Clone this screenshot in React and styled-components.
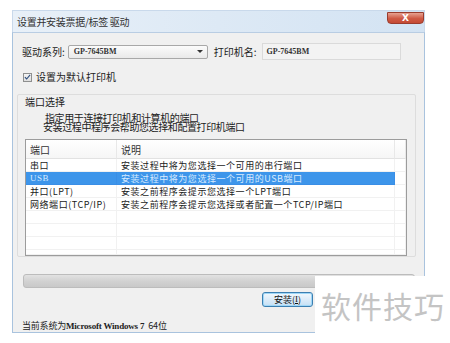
import styled, { createGlobalStyle } from "styled-components";

const Global = createGlobalStyle`
  html, body {
    margin: 0;
    padding: 0;
    background: #ffffff;
    width: 450px;
    height: 343px;
    overflow: hidden;
  }
  body {
    font-family: "Noto Sans CJK SC", "Liberation Sans", sans-serif;
    font-size: 11px;
    color: #1a1a1a;
  }
`;

const Page = styled.div`
  position: relative;
  width: 450px;
  height: 343px;
  padding-top: 10px;
  box-sizing: border-box;
`;

const Window = styled.div`
  margin-left: 12px;
  width: 413px;
`;

const TitleBar = styled.div`
  height: 22px;
  display: flex;
  align-items: center;
  justify-content: space-between;
  padding-left: 4px;
  background: linear-gradient(90deg, #e8f0f8 0%, #dde9f5 50%, #d3e3f3 100%);
  border: 1px solid #c9d9eb;
  border-bottom: none;
  box-sizing: border-box;
`;

const Title = styled.span`
  font-size: 10px;
  color: #333;
  letter-spacing: -0.3px;
`;

const CloseBtn = styled.div`
  align-self: flex-start;
  margin-top: 1px;
  width: 37px;
  height: 12px;
  border-radius: 0 0 4px 4px;
  background: linear-gradient(180deg, #e7a291 0%, #cf5a45 55%, #c44a34 100%);
  border: 1px solid #9a3c2e;
  box-sizing: border-box;
  display: flex;
  align-items: center;
  justify-content: center;
  color: #fff;
  font: bold 9px "DejaVu Sans", sans-serif;
`;

const Body = styled.div`
  height: 301px;
  background: #f0f0f0;
  border: 1px solid #a9c3de;
  border-top: 1px solid #b9cde3;
  box-sizing: border-box;
  padding: 10px 8px 0 9px;
  display: flex;
  flex-direction: column;
`;

const Row = styled.div`
  display: flex;
  align-items: center;
  height: 17px;
`;

const Label = styled.span`
  font-size: 10px;
  line-height: 12px;
  color: #222;
  margin-right: ${({ $gap }) => $gap || 4}px;
`;

const Select = styled.div`
  width: 140px;
  height: 14px;
  box-sizing: border-box;
  border: 1px solid #a8a8a8;
  border-radius: 2px;
  background: linear-gradient(180deg, #fbfbfb, #e9e9e9);
  display: flex;
  align-items: center;
  justify-content: space-between;
  padding: 0 4px 0 5px;
  margin-right: 6px;
`;

const Mono = styled.span`
  font-family: "Liberation Serif", serif;
  font-weight: bold;
  font-size: 8px;
  line-height: 10px;
  color: #333;
`;

const Arrow = styled.span`
  width: 0;
  height: 0;
  border-left: 3px solid transparent;
  border-right: 3px solid transparent;
  border-top: 3px solid #333;
`;

const Input = styled.div`
  width: 139px;
  height: 17px;
  box-sizing: border-box;
  border: 1px solid #dadada;
  background: #f3f3f3;
  display: flex;
  align-items: center;
  padding-left: 4px;
`;

const CheckRow = styled.div`
  display: flex;
  align-items: center;
  margin-top: 11px;
  padding-left: 1px;
  height: 12px;
`;

const Box = styled.span`
  width: 9px;
  height: 9px;
  box-sizing: border-box;
  border: 1px solid #8e8f8f;
  background: linear-gradient(180deg, #f4f4f4, #dedede);
  display: flex;
  align-items: center;
  justify-content: center;
  margin-right: 4px;
`;

const Group = styled.div`
  margin-top: 11px;
  margin-left: -5px;
  width: 399px;
  height: 170px;
  box-sizing: border-box;
  border: 1px solid #dddddd;
  border-radius: 2px;
  padding: 0 0 0 7px;
  display: flex;
  flex-direction: column;
`;

const GroupLabel = styled.span`
  font-size: 10px;
  margin-top: 1px;
  line-height: 12px;
  color: #222;
`;

const Desc = styled.div`
  margin-top: 5px;
  padding-left: 20px;
  font-size: 10px;
  line-height: 9px;
  color: #222;
  letter-spacing: -0.4px;
  & div:last-child {
    margin-left: -2px;
  }
`;

const Table = styled.div`
  margin-top: 8px;
  width: 382px;
  height: 117px;
  box-sizing: border-box;
  border: 1px solid #9c9c9c;
  background: #ffffff;
  display: grid;
  grid-template-columns: 91px 278px 1fr;
  grid-template-rows: 19px repeat(7, 13px) 1fr;
  font-size: 9px;
  line-height: 13px;
`;

const Head = styled.div`
  border-bottom: 1px solid #e2e2e2;
  border-right: 1px solid #e8e8e8;
  padding-left: 4px;
  display: flex;
  align-items: center;
  color: #333;
  font-size: 10px;
  background: linear-gradient(180deg, #ffffff, #f6f6f6);
`;

const Cell = styled.div`
  padding-left: 4px;
  display: flex;
  align-items: center;
  white-space: nowrap;
  letter-spacing: 0.55px;
  box-shadow: inset -1px -1px 0 ${({ $sel }) => ($sel ? "#3a8ee6" : "#f1f1f1")};
  background: ${({ $sel }) => ($sel ? "#3d95ea" : "transparent")};
  color: ${({ $sel }) => ($sel ? "#d8ebff" : "#1a1a1a")};
  font-family: ${({ $latin }) =>
    $latin ? '"Liberation Serif", "Noto Sans CJK SC", serif' : "inherit"};
`;

const Progress = styled.div`
  margin-top: 17px;
  margin-left: 1px;
  width: 392px;
  height: 17px;
  box-sizing: border-box;
  border: 1px solid #bcbcbc;
  border-radius: 3px;
  background: linear-gradient(180deg, #e2e2e2 0%, #d2d2d2 50%, #c9c9c9 100%);
`;

const ButtonRow = styled.div`
  display: flex;
  justify-content: flex-start;
  padding-left: 240px;
  margin-top: 4px;
`;

const Button = styled.div`
  width: 51px;
  height: 15px;
  box-sizing: border-box;
  border: 1px solid #3c7fb1;
  border-radius: 3px;
  background: linear-gradient(180deg, #f2f8fd 0%, #dcecf9 50%, #c5e0f5 100%);
  box-shadow: inset 0 0 0 1px #9fd7f7;
  display: flex;
  align-items: center;
  justify-content: center;
  font-size: 9px;
  line-height: 11px;
  color: #111;
  u {
    font-family: "Liberation Serif", serif;
  }
`;

const Status = styled.div`
  margin-top: 13px;
  font-size: 9px;
  line-height: 11px;
  color: #222;
  letter-spacing: -0.2px;
  span {
    font-family: "Liberation Serif", serif;
    font-weight: bold;
    font-size: 9px;
  }
`;

const Watermark = styled.div`
  position: absolute;
  left: 315px;
  top: 276px;
  width: 135px;
  height: 57px;
  background: #ffffff;
  display: flex;
  align-items: center;
  padding-left: 6px;
  box-sizing: border-box;
  font-size: 30px;
  color: #c4c4c4;
  letter-spacing: 1px;
  font-family: "Noto Sans CJK SC", sans-serif;
`;

const Check = () => (
  <svg width="8" height="8" viewBox="0 0 8 8">
    <path d="M1 4.2 L3 6.3 L7 1.5" fill="none" stroke="#2f4f7f" strokeWidth="1.3" />
  </svg>
);

const rows = [
  ["串口", "安装过程中将为您选择一个可用的串行端口"],
  ["USB", "安装过程中将为您选择一个可用的USB端口", true],
  ["并口(LPT)", "安装之前程序会提示您选择一个LPT端口"],
  ["网络端口(TCP/IP)", "安装之前程序会提示您选择或者配置一个TCP/IP端口"],
  ["", ""],
  ["", ""],
  ["", ""],
  ["", ""],
];

export default function App() {
  return (
    <Page>
      <Global />
      <Window>
        <TitleBar>
          <Title>设置并安装票据/标签 驱动</Title>
          <CloseBtn>X</CloseBtn>
        </TitleBar>
        <Body>
          <Row>
            <Label $gap={3}>驱动系列:</Label>
            <Select>
              <Mono>GP-7645BM</Mono>
              <Arrow />
            </Select>
            <Label $gap={5}>打印机名:</Label>
            <Input>
              <Mono>GP-7645BM</Mono>
            </Input>
          </Row>
          <CheckRow>
            <Box>
              <Check />
            </Box>
            <Label>设置为默认打印机</Label>
          </CheckRow>
          <Group>
            <GroupLabel>端口选择</GroupLabel>
            <Desc>
              <div>指定用于连接打印机和计算机的端口</div>
              <div>安装过程中程序会帮助您选择和配置打印机端口</div>
            </Desc>
            <Table>
              <Head>端口</Head>
              <Head>说明</Head>
              <Head />
              {rows.flatMap(([a, b, sel], i) => [
                <Cell key={`a${i}`} $sel={sel} $latin={a === "USB"}>
                  {a}
                </Cell>,
                <Cell key={`b${i}`} $sel={sel}>
                  {b}
                </Cell>,
                <Cell key={`c${i}`} />,
              ])}
            </Table>
          </Group>
          <Progress />
          <ButtonRow>
            <Button>
              安装(<u>I</u>)
            </Button>
          </ButtonRow>
          <Status>
            当前系统为<span>Microsoft Windows 7&nbsp;&nbsp;</span>64位
          </Status>
        </Body>
      </Window>
      <Watermark>软件技巧</Watermark>
    </Page>
  );
}
